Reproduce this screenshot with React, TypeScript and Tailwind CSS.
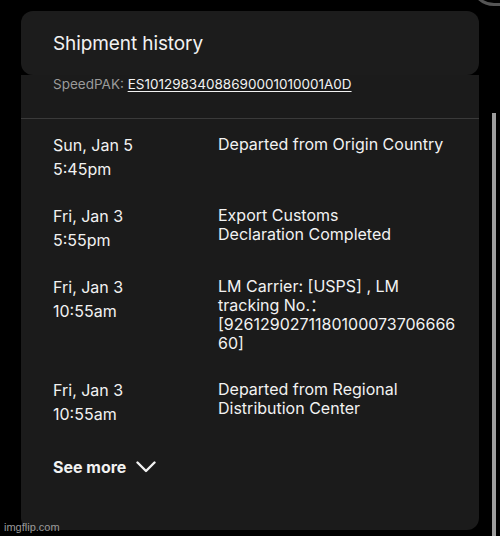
export default function App() {
  // line breaks kept as they appear in the app
  const events = [
    { date: "Sun, Jan 5", time: "5:45pm", lines: ["Departed from Origin Country"] },
    { date: "Fri, Jan 3", time: "5:55pm", lines: ["Export Customs", "Declaration Completed"] },
    {
      date: "Fri, Jan 3",
      time: "10:55am",
      lines: ["LM Carrier: [USPS] , LM", "tracking No.：", "[9261290271180100073706666", "60]"],
    },
    { date: "Fri, Jan 3", time: "10:55am", lines: ["Departed from Regional", "Distribution Center"] },
  ];

  return (
    <div className="relative w-[500px] h-[536px] overflow-hidden bg-black font-['Inter','Noto_Sans_CJK_SC',sans-serif] text-[#f2f2f2]">
      {/* stray circle peeking in top right */}
      <div className="absolute -top-[42px] left-[470px] w-[60px] h-[48px] rounded-full border-[3px] border-[#555]" />

      <div className="pt-[11px] pl-[21px]">
        <div className="w-[458px]">
          {/* Sticky header */}
          <div className="relative z-10 h-[64px] rounded-[12px] bg-[#1c1c1c] px-8 flex items-center">
            <h2 className="text-[19px] leading-none tracking-[-0.1px]">Shipment history</h2>
          </div>

          <div className="h-[455px] rounded-b-[12px] bg-[#1b1b1b]">
            <p className="px-8 text-[13.5px] leading-[18px]">
              <span className="text-[#9a9a9a]">SpeedPAK: </span>
              <span className="underline underline-offset-2">ES10129834088690001010001A0D</span>
            </p>

            <div className="mt-[25px] h-px bg-[#3a3a3a]" />

            <div className="pt-[14px] px-8 flex flex-col gap-[23px]">
              {events.map((e, i) => (
                <div key={i} className="flex text-[16px]">
                  <div className="w-[165px] shrink-0 leading-[24px]">
                    <div>{e.date}</div>
                    <div>{e.time}</div>
                  </div>
                  <div className="pt-[2px] pb-[2px] leading-[19px] whitespace-nowrap">
                    {e.lines.map((l, j) => (
                      <div key={j}>{l}</div>
                    ))}
                  </div>
                </div>
              ))}
            </div>

            <button className="mt-[29px] ml-8 flex items-center gap-[10px] text-[16px] leading-[24px] font-bold text-[#f2f2f2]">
              See more
              <svg width="20" height="12" viewBox="0 0 20 12" fill="none">
                <path d="M1.5 1.5 L10 10 L18.5 1.5" stroke="#f2f2f2" strokeWidth="2.4" strokeLinecap="round" strokeLinejoin="round" />
              </svg>
            </button>
          </div>
        </div>
      </div>

      {/* scrollbar */}
      <div className="absolute left-[492px] top-[113px] w-[4px] h-[430px] bg-[#9e9e9e]" />

      {/* watermark */}
      <div className="absolute left-[4px] top-[520px] text-[11px] leading-[14px] text-[#9a9a9a] font-['Liberation_Sans',sans-serif]">
        imgflip.com
      </div>
    </div>
  );
}
